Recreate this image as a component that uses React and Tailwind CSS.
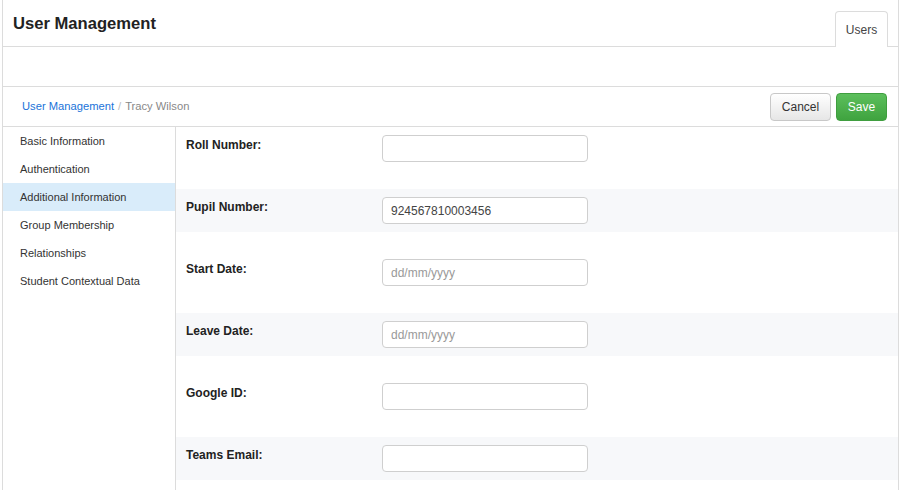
import React from 'react';

const menu = [
  'Basic Information',
  'Authentication',
  'Additional Information',
  'Group Membership',
  'Relationships',
  'Student Contextual Data',
];

const fields = [
  { label: 'Roll Number:', value: '' },
  { label: 'Pupil Number:', value: '924567810003456' },
  { label: 'Start Date:', placeholder: 'dd/mm/yyyy' },
  { label: 'Leave Date:', placeholder: 'dd/mm/yyyy' },
  { label: 'Google ID:', value: '' },
  { label: 'Teams Email:', value: '' },
];

export default function App() {
  return (
    <div className="w-[902px] h-[490px] overflow-hidden bg-white font-['Liberation_Sans',Arial,sans-serif] text-[#333]">
      <div className="ml-[2px] w-[897px] h-full border-x border-[#dcdcdc] flex flex-col">
        {/* header */}
        <div className="h-[47px] flex items-end border-b border-[#dcdcdc] shrink-0">
          <h1 className="self-start pl-[10px] pt-[14px] text-[16.6px] font-bold text-[#222] leading-5">User Management</h1>
          <div className="ml-auto mr-[10px] mb-[-1px] w-[53px] h-[36px] bg-white border border-b-0 border-[#dcdcdc] rounded-t-[4px] flex items-center justify-center text-[12px] text-[#444]">
            Users
          </div>
        </div>

        <div className="h-[40px] border-b border-[#dcdcdc] shrink-0" />

        {/* breadcrumb + actions */}
        <div className="h-[40px] flex items-center border-b border-[#dcdcdc] pl-[19px] pr-[11px] shrink-0">
          <div className="text-[11.2px]">
            <span className="text-[#1a73d9]">User Management</span>
            <span className="text-[#bbb] mx-[4px]">/</span>
            <span className="text-[#888]">Tracy Wilson</span>
          </div>
          <div className="ml-auto flex gap-[5px]">
            <button className="h-[28px] w-[61px] rounded-[4px] border border-[#c8c8c8] bg-gradient-to-b from-white to-[#e6e6e6] text-[12px] text-[#333]">
              Cancel
            </button>
            <button className="h-[28px] w-[51px] rounded-[4px] border border-[#3f9e3f] bg-gradient-to-b from-[#5cbf5c] to-[#3fa33f] text-[12px] text-white">
              Save
            </button>
          </div>
        </div>

        {/* body */}
        <div className="flex flex-1">
          <div className="w-[173px] border-r border-[#dcdcdc] shrink-0">
            {menu.map((m) => (
              <div
                key={m}
                className={`h-[28px] flex items-center pl-[17px] text-[11px] text-[#333] ${m === 'Additional Information' ? 'bg-[#d9ecfa]' : ''}`}
              >
                {m}
              </div>
            ))}
          </div>
          <div className="flex-1">
            {fields.map((f, i) => (
              <div
                key={f.label}
                className={`h-[43px] mb-[19px] flex ${i % 2 === 1 ? 'bg-[#f7f8fa]' : ''}`}
              >
                <div className="w-[206px] pl-[10px] pt-[10px] text-[12px] font-bold leading-4 text-[#222]">{f.label}</div>
                <input
                  readOnly
                  value={f.value || ''}
                  placeholder={f.placeholder || ''}
                  className="mt-[8px] w-[206px] h-[27px] rounded-[4px] border border-[#cfcfcf] bg-white px-[8px] text-[12px] text-[#444] placeholder:text-[#999] outline-none"
                />
              </div>
            ))}
          </div>
        </div>
      </div>
    </div>
  );
}
